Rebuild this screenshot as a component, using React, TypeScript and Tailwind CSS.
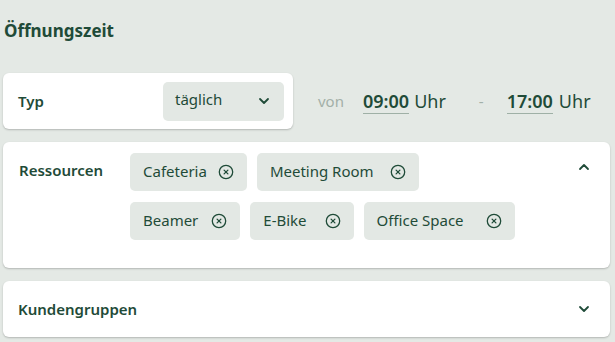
import React from "react";

const green = "text-[#1f4b38]";

function CloseCircle() {
  return (
    <svg width="16" height="16" viewBox="0 0 16 16" fill="none" className="shrink-0">
      <circle cx="8" cy="8" r="6.7" stroke="#1f4b38" strokeWidth="1.3" />
      <path d="M6.1 6.1 L9.9 9.9 M9.9 6.1 L6.1 9.9" stroke="#1f4b38" strokeWidth="1.3" strokeLinecap="round" />
    </svg>
  );
}

function Chevron({ up = false }: { up?: boolean }) {
  return (
    <svg width="12" height="8" viewBox="0 0 12 8" fill="none">
      <path
        d={up ? "M2 6 L6 2 L10 6" : "M2 2 L6 6 L10 2"}
        stroke="#1f4b38"
        strokeWidth="1.8"
        strokeLinecap="round"
        strokeLinejoin="round"
      />
    </svg>
  );
}

function Chip({ label, gap }: { label: string; gap: string }) {
  return (
    <div className={`flex h-[38px] items-center rounded-[5px] bg-[#e3e8e4] pl-[13px] pr-[13px] text-[15px] ${green} ${gap}`}>
      <span className="-mt-[1px]">{label}</span>
      <CloseCircle />
    </div>
  );
}

export default function App() {
  return (
    <div
      className="h-[342px] w-[615px] overflow-hidden bg-[#e4e9e5] px-[3px]"
      style={{ fontFamily: '"Noto Sans", "Open Sans", sans-serif' }}
    >
      <div className={`flex h-[73px] items-start pt-[18px] pl-[1px] text-[17px] font-bold ${green}`}>
        Öffnungszeit
      </div>

      <div className="flex items-center">
        <div className="flex h-[56px] w-[290px] items-center justify-between rounded-[6px] bg-white pl-[15px] pr-[9px] shadow-[0_1px_2px_rgba(0,0,0,0.22)]">
          <span className={`text-[15px] font-semibold ${green}`}>Typ</span>
          <div className={`flex h-[39px] w-[121px] items-center justify-between rounded-[5px] bg-[#e3e8e4] pl-[12px] pr-[14px] text-[15px] ${green}`}>
            <span className="-mt-[3px]">täglich</span>
            <Chevron />
          </div>
        </div>
        <span className="ml-[25px] text-[15px] text-[#a3b0a8]">von</span>
        <span className={`ml-[19px] border-b border-[#9fb0a6] text-[18px] font-semibold leading-[24px] ${green}`}>09:00</span>
        <span className={`ml-[5px] text-[18px] leading-[24px] ${green}`}>Uhr</span>
        <span className="ml-[33px] text-[15px] text-[#a3b0a8]">-</span>
        <span className={`ml-[23px] border-b border-[#9fb0a6] text-[18px] font-semibold leading-[24px] ${green}`}>17:00</span>
        <span className={`ml-[6px] text-[18px] leading-[24px] ${green}`}>Uhr</span>
      </div>

      <div className="mt-[13px] flex h-[126px] w-[607px] items-start rounded-[6px] bg-white pt-[11px] pl-[16px] pr-[20px] shadow-[0_1px_2px_rgba(0,0,0,0.22)]">
        <span className={`w-[111px] pt-[6px] text-[15px] font-semibold ${green}`}>Ressourcen</span>
        <div className="flex w-[400px] flex-wrap gap-x-[10px] gap-y-[11px]">
          <Chip label="Cafeteria" gap="gap-[11px]" />
          <Chip label="Meeting Room" gap="gap-[16px]" />
          <Chip label="Beamer" gap="gap-[13px]" />
          <Chip label="E-Bike" gap="gap-[18px]" />
          <Chip label="Office Space" gap="gap-[22px]" />
        </div>
        <div className="ml-auto pt-[10px]">
          <Chevron up />
        </div>
      </div>

      <div className="mt-[13px] flex h-[56px] w-[607px] items-center justify-between rounded-[6px] bg-white pl-[15px] pr-[20px] shadow-[0_1px_2px_rgba(0,0,0,0.22)]">
        <span className={`text-[15px] font-semibold ${green}`}>Kundengruppen</span>
        <Chevron />
      </div>
    </div>
  );
}
